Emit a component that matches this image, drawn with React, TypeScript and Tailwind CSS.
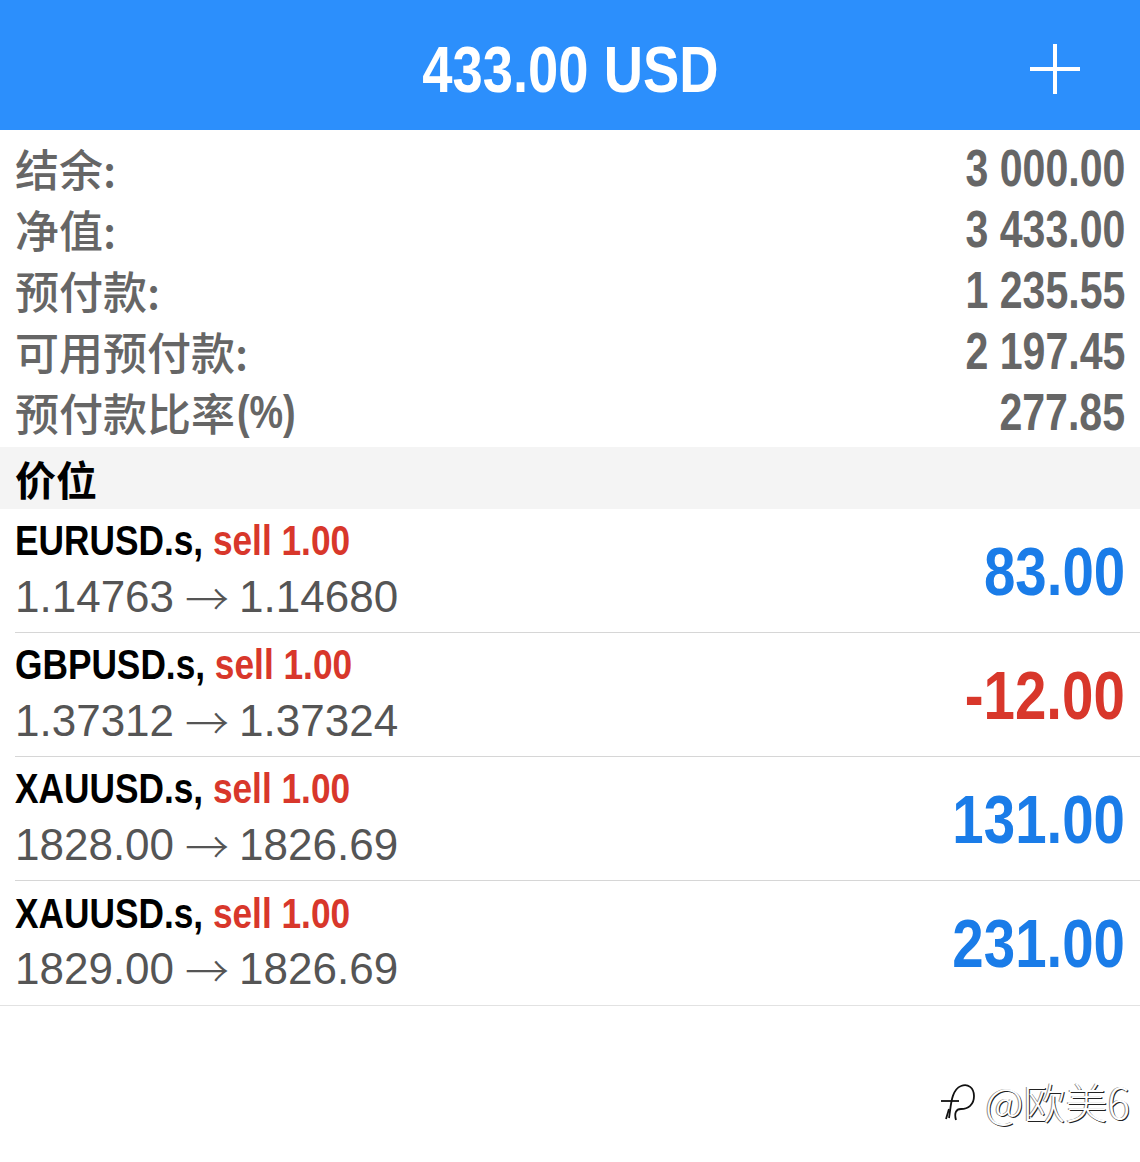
const latin = "font-['Liberation_Sans','Noto_Sans_CJK_SC',sans-serif]";
const cjk = "font-['Noto_Sans_CJK_SC',sans-serif]";

const summary = [
  { label: "结余:", value: "3 000.00" },
  { label: "净值:", value: "3 433.00" },
  { label: "预付款:", value: "1 235.55" },
  { label: "可用预付款:", value: "2 197.45" },
  { label: "预付款比率", suffix: "(%)", value: "277.85" },
];

const positions = [
  { symbol: "EURUSD.s,", side: "sell 1.00", from: "1.14763", to: "1.14680", profit: "83.00", up: true },
  { symbol: "GBPUSD.s,", side: "sell 1.00", from: "1.37312", to: "1.37324", profit: "-12.00", up: false },
  { symbol: "XAUUSD.s,", side: "sell 1.00", from: "1828.00", to: "1826.69", profit: "131.00", up: true },
  { symbol: "XAUUSD.s,", side: "sell 1.00", from: "1829.00", to: "1826.69", profit: "231.00", up: true },
];

const App = () => {
  return (
    <div className={`w-[1140px] h-[1162px] bg-white ${latin}`}>
      {/* top bar */}
      <div className="h-[130px] bg-[#2c8ffc] grid grid-cols-[1fr_auto_1fr] items-center">
        <div />
        <h1 className="text-white font-bold text-[64px] leading-none pt-[10px] inline-block scale-x-[0.85] origin-center">
          433.00 USD
        </h1>
        <div className="flex justify-end pr-[60px] pt-[8px]">
          <svg width="50" height="50" viewBox="0 0 50 50" stroke="white" strokeWidth="4">
            <path d="M25 0 V50 M0 25 H50" />
          </svg>
        </div>
      </div>

      {/* account summary */}
      <div className="pt-[7px] pb-[5px]">
        {summary.map((row) => (
          <div key={row.label} className="h-[61px] flex items-center justify-between px-[15px]">
            <span className={`${cjk} font-medium text-[44px] leading-none text-[#666666] flex items-center`}>
              {row.label}
              {row.suffix && (
                <span className={`${latin} font-bold inline-block scale-x-[0.82] origin-left text-[46px] ml-[2px]`}>
                  {row.suffix}
                </span>
              )}
            </span>
            <span className="font-bold text-[52px] leading-none text-[#666666] inline-block scale-x-[0.79] origin-right">
              {row.value}
            </span>
          </div>
        ))}
      </div>

      {/* positions header */}
      <div className="h-[62px] bg-[#f4f4f4] flex items-center pl-[15px]">
        <span className={`${cjk} font-bold text-[41px] leading-none text-black`}>价位</span>
      </div>

      {/* positions */}
      <div className="border-b border-[#e2e2e2]">
        {positions.map((p, i) => (
          <div key={i} className="pl-[15px]">
            <div
              className={`h-[124px] flex items-center justify-between pr-[15px] ${
                i < positions.length - 1 ? "border-b border-[#d6d6d6]" : ""
              }`}
            >
              <div className="flex flex-col">
                <div className="font-bold text-[43px] leading-none h-[48px] flex items-center mt-[-2px]">
                  <span className="inline-block whitespace-nowrap scale-x-[0.82] origin-left">
                    <span className="text-black">{p.symbol}</span>{" "}
                    <span className="text-[#d8372b]">{p.side}</span>
                  </span>
                </div>
                <div className="text-[44px] leading-none text-[#555555] h-[52px] flex items-center mt-[6px] whitespace-nowrap">
                  {p.from}
                  <span className={`${cjk} font-light text-[44px] ml-[11px] mr-[10px]`}>→</span>
                  {p.to}
                </div>
              </div>
              <span
                className={`font-bold text-[68px] leading-none inline-block scale-x-[0.83] origin-right ${
                  p.up ? "text-[#1a7ce8]" : "text-[#d8372b]"
                }`}
              >
                {p.profit}
              </span>
            </div>
          </div>
        ))}
      </div>

      {/* watermark */}
      <div className="flex justify-end pr-[10px] pt-[72px]">
        <div className="flex items-center gap-[6px] text-white text-[42px] leading-none [text-shadow:1px_1px_0_#222,-1px_0_0_#888]">
          <svg width="40" height="46" viewBox="0 0 40 46" fill="none" stroke="#111" strokeWidth="1.8">
            <path d="M10 40 C12 28 12 12 22 8 C29 5 35 10 35 18 C35 27 29 31 22 31 C17 31 15 35 17 42" />
            <path d="M2 23 L20 23" />
            <path d="M7 41 L10 31" />
          </svg>
          <span className={`${cjk} font-light`}>@欧美6</span>
        </div>
      </div>
    </div>
  );
};

export default App;
